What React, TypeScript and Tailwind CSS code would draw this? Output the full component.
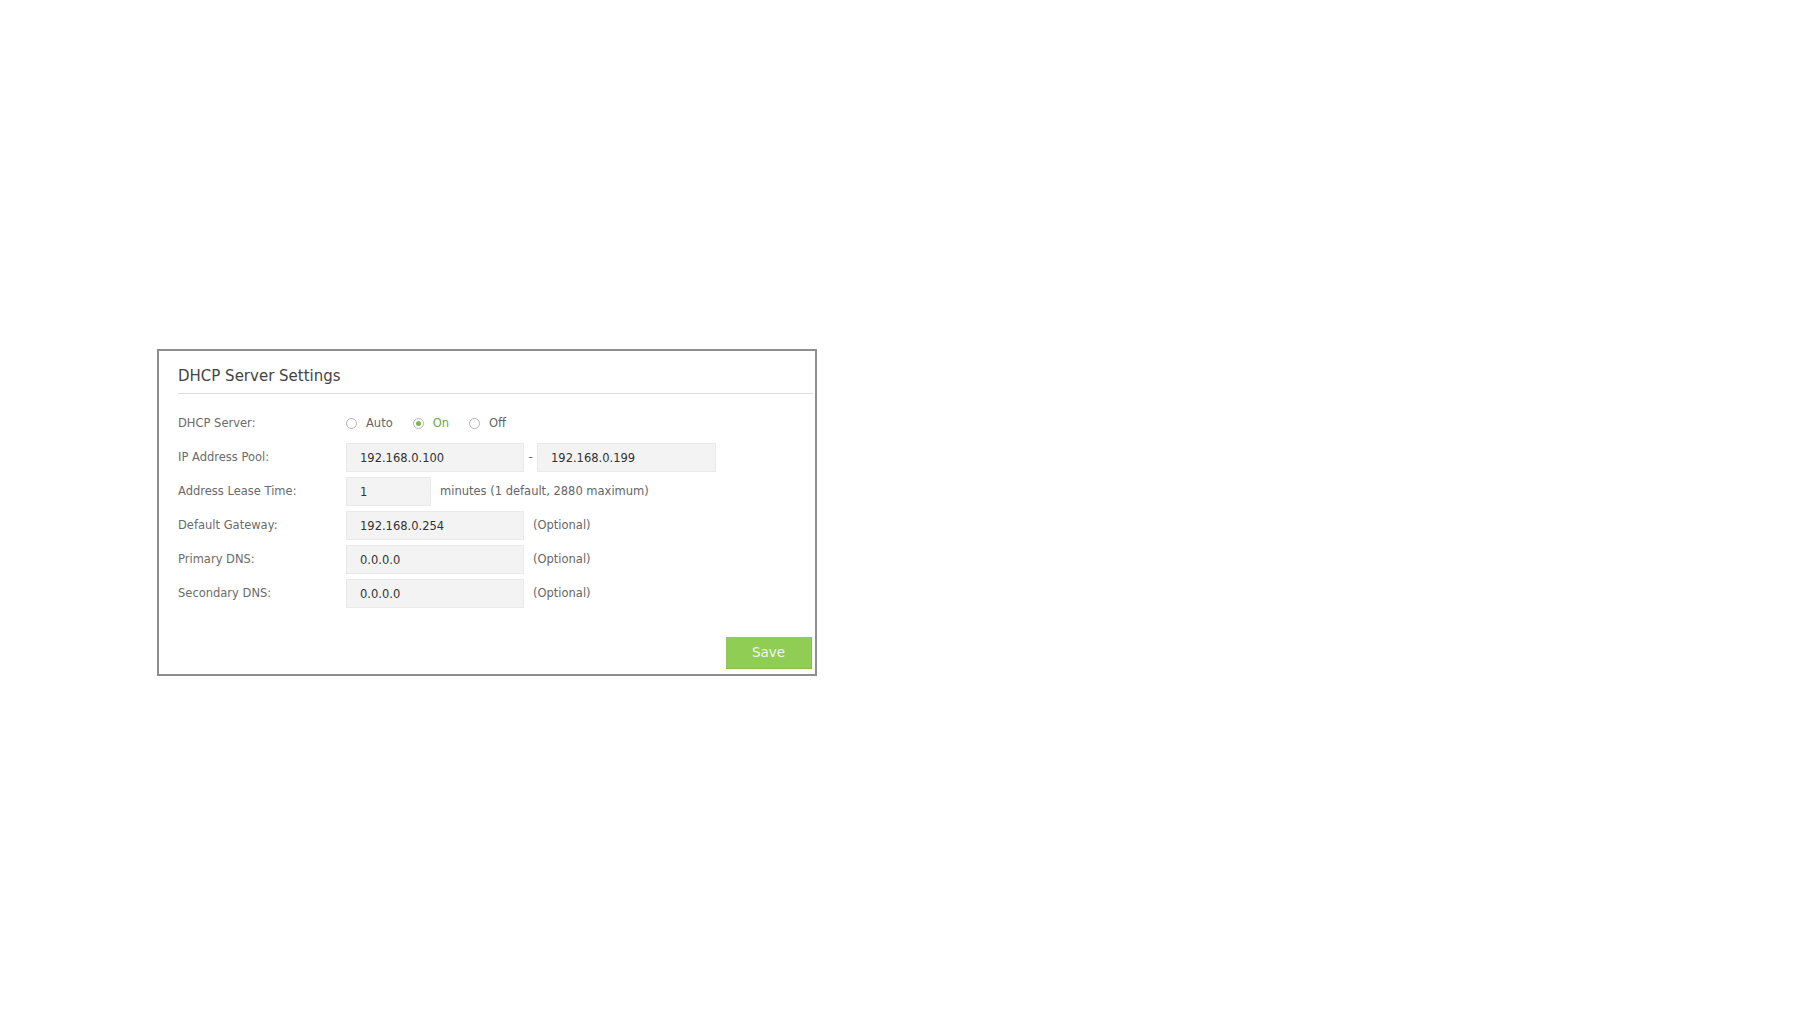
import { useState } from "react";

const font = { fontFamily: '"DejaVu Sans", Verdana, sans-serif' };

type Mode = "auto" | "on" | "off";

function Radio({
  label,
  checked,
  onSelect,
}: {
  label: string;
  checked: boolean;
  onSelect: () => void;
}) {
  return (
    <button
      type="button"
      onClick={onSelect}
      className="flex items-center gap-[9px] mr-[20px] last:mr-0"
    >
      <span className="w-[11px] h-[11px] rounded-full border border-[#b5b5b5] bg-white flex items-center justify-center">
        {checked && <span className="w-[5px] h-[5px] rounded-full bg-[#7bb84a]" />}
      </span>
      <span className={checked ? "text-[#67ab3c]" : "text-[#666]"}>{label}</span>
    </button>
  );
}

function Field({ value, width }: { value: string; width: string }) {
  return (
    <input
      type="text"
      readOnly
      defaultValue={value}
      className={`${width} h-[29px] pl-[13px] bg-[#f3f3f3] border border-[#e9e9e9] text-[#333] outline-none`}
    />
  );
}

function Row({ label, children }: { label: string; children: React.ReactNode }) {
  return (
    <div className="flex items-center h-[29px]">
      <div className="w-[168px] shrink-0 text-[#6b6b6b]">{label}</div>
      <div className="flex items-center">{children}</div>
    </div>
  );
}

function Hint({ text }: { text: string }) {
  return <span className="ml-[9px] text-[#666]">{text}</span>;
}

export default function App() {
  const [mode, setMode] = useState<Mode>("on");

  return (
    <div className="min-h-screen bg-white pt-[349px] pl-[157px]" style={font}>
      <div className="w-[660px] border-2 border-[#8e8e8e] pl-[19px] pr-[2px] pt-[15px] pb-[5px]">
        {/* Header */}
        <div className="pb-[7px] border-b border-[#dcdcdc]">
          <h2 className="text-[15px] leading-[20px] text-[#444]">DHCP Server Settings</h2>
        </div>

        {/* Form rows */}
        <div className="mt-[15px] flex flex-col gap-[5px] text-[11.5px]">
          <Row label="DHCP Server:">
            <Radio label="Auto" checked={mode === "auto"} onSelect={() => setMode("auto")} />
            <Radio label="On" checked={mode === "on"} onSelect={() => setMode("on")} />
            <Radio label="Off" checked={mode === "off"} onSelect={() => setMode("off")} />
          </Row>
          <Row label="IP Address Pool:">
            <Field value="192.168.0.100" width="w-[178px]" />
            <span className="w-[13px] text-center text-[#666]">-</span>
            <Field value="192.168.0.199" width="w-[179px]" />
          </Row>
          <Row label="Address Lease Time:">
            <Field value="1" width="w-[85px]" />
            <Hint text="minutes (1 default, 2880 maximum)" />
          </Row>
          <Row label="Default Gateway:">
            <Field value="192.168.0.254" width="w-[178px]" />
            <Hint text="(Optional)" />
          </Row>
          <Row label="Primary DNS:">
            <Field value="0.0.0.0" width="w-[178px]" />
            <Hint text="(Optional)" />
          </Row>
          <Row label="Secondary DNS:">
            <Field value="0.0.0.0" width="w-[178px]" />
            <Hint text="(Optional)" />
          </Row>
        </div>

        {/* Footer */}
        <div className="mt-[29px] flex justify-end pr-[1px]">
          <button
            type="button"
            className="w-[86px] h-[32px] bg-[#8fcd54] text-[#f1f8e9] text-[13.5px] border-b border-r border-[#84c04a]"
          >
            Save
          </button>
        </div>
      </div>
    </div>
  );
}
